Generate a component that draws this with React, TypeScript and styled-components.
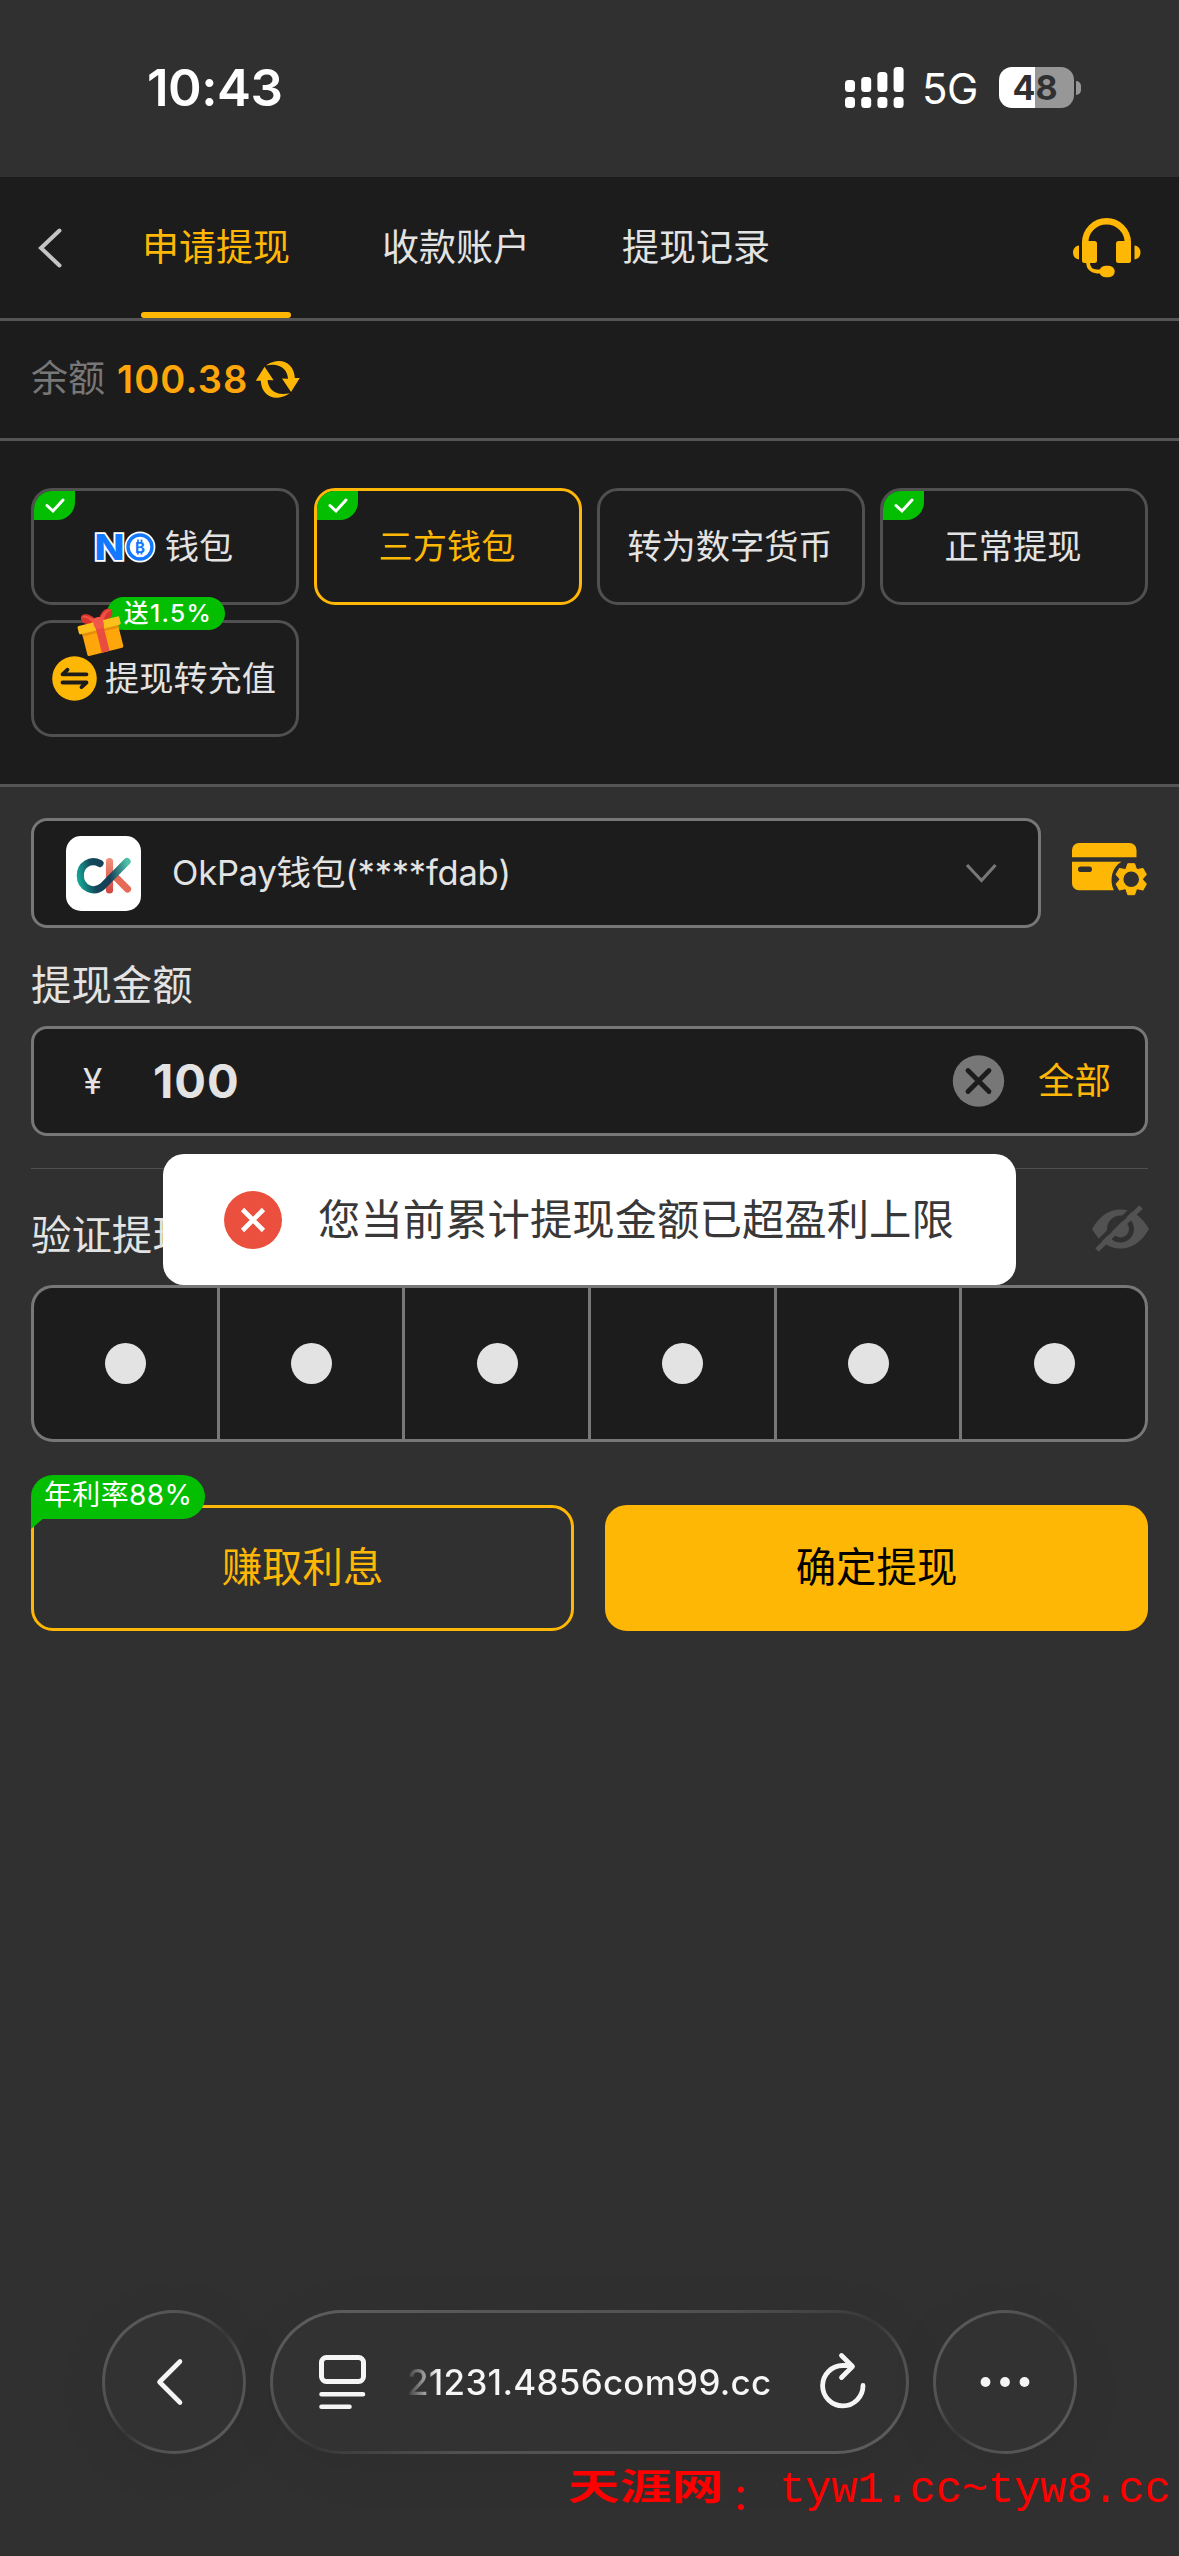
import React from "react";
import styled, { createGlobalStyle, css } from "styled-components";

const c = {
  page: "#303030",
  panel: "#1c1c1c",
  line: "#555555",
  field: "#777777",
  text: "#e3e3e3",
  gold: "#ffb706",
  green: "#04be02",
};

const Global = createGlobalStyle`
  * { box-sizing: border-box; }
  html, body { margin: 0; padding: 0; background: ${c.page}; }
  body {
    font-family: Inter, "Noto Sans CJK SC", sans-serif;
    color: ${c.text};
  }
  button { font: inherit; color: inherit; background: none; border: 0; padding: 0; margin: 0; }
  svg { display: block; flex: none; overflow: visible; }
`;

const Page = styled.div`
  position: relative;
  display: flex;
  flex-direction: column;
  width: 1179px;
  height: 2556px;
  overflow: hidden;
  background: ${c.page};
`;

/* ---------- status bar ---------- */
const StatusBar = styled.header`
  display: flex;
  align-items: center;
  justify-content: space-between;
  height: 177px;
  padding: 0 97px 2px 147px;
  color: #fff;
`;
const Clock = styled.span`
  font-size: 51px;
  font-weight: 600;
  line-height: 60px;
  letter-spacing: -0.5px;
`;
const StatusRight = styled.div`
  display: flex;
  align-items: center;
`;
const Network = styled.span`
  margin: 3px 0 0 17px;
  width: 77px;
  font-size: 42px;
  line-height: 42px;
  letter-spacing: -0.5px;
`;
const Battery = styled.div`
  display: flex;
  align-items: center;
  justify-content: center;
  width: 75px;
  height: 41px;
  padding-right: 3px;
  border-radius: 13px;
  background: linear-gradient(90deg, #fff 48%, #979797 48%);
  color: ${c.page};
  font-size: 34px;
  font-weight: 700;
  line-height: 41px;
`;
const BatteryTip = styled.div`
  width: 5px;
  height: 14px;
  margin-left: 2px;
  margin-right: 1px;
  border-radius: 0 5px 5px 0;
  background: #979797;
`;

/* ---------- navigation ---------- */
const Nav = styled.nav`
  display: flex;
  align-items: stretch;
  height: 144px;
  padding: 0 38px;
  background: ${c.panel};
  border-bottom: 3px solid ${c.line};
`;
const NavBack = styled.button`
  display: flex;
  align-items: center;
  width: 103px;
`;
const Tabs = styled.div`
  display: flex;
  flex: 1;
  gap: 90px;
`;
const Tab = styled.button<{ $active?: boolean }>`
  display: flex;
  flex-direction: column;
  align-items: center;
  justify-content: center;
  width: 150px;
  padding-top: 6px;
  border-bottom: 6px solid transparent;
  font-size: 37px;
  line-height: 40px;
  white-space: nowrap;
  color: ${(p) => (p.$active ? c.gold : c.text)};
`;
const TabLabel = styled.span`
  display: flex;
  flex: 1;
  align-items: center;
`;
const Underline = styled.span`
  width: 150px;
  height: 6px;
  margin-bottom: -6px;
  border-radius: 3px;
  background: ${c.gold};
`;
const Support = styled.button`
  display: flex;
  align-items: center;
`;

/* ---------- balance ---------- */
const Balance = styled.section`
  display: flex;
  align-items: center;
  height: 120px;
  padding: 0 31px 1px;
  background: ${c.panel};
  border-bottom: 3px solid ${c.line};
`;
const BalanceLabel = styled.span`
  width: 86px;
  font-size: 37px;
  line-height: 40px;
  color: #777;
`;
const BalanceValue = styled.span`
  width: 139px;
  font-size: 38px;
  font-weight: 600;
  line-height: 40px;
  letter-spacing: 1.1px;
  color: #ffa70a;
`;

/* ---------- methods ---------- */
const Methods = styled.section`
  display: grid;
  grid-template-columns: repeat(4, 1fr);
  grid-auto-rows: 117px;
  gap: 15px;
  height: 346px;
  padding: 47px 31px;
  background: ${c.panel};
  border-bottom: 3px solid ${c.line};
`;
const Method = styled.button<{ $active?: boolean; $gap?: number }>`
  position: relative;
  display: flex;
  align-items: center;
  justify-content: center;
  gap: ${(p) => p.$gap ?? 0}px;
  padding-right: 2px;
  border: 3px solid ${(p) => (p.$active ? c.gold : "#505050")};
  border-radius: 21px;
  font-size: 34.2px;
  line-height: 40px;
  white-space: nowrap;
  color: ${(p) => (p.$active ? c.gold : c.text)};
`;
const Check = styled.span`
  position: absolute;
  left: 0;
  top: 0;
  display: flex;
  align-items: center;
  justify-content: center;
  width: 41px;
  height: 29px;
  border-radius: 18px 0 18px 0;
  background: ${c.green};
`;
const Bonus = styled.span`
  position: absolute;
  left: 73px;
  top: -26px;
  width: 118px;
  height: 33px;
  padding-left: 17px;
  border-radius: 17px;
  background: ${c.green};
  color: #fff;
  font-size: 24.5px;
  font-weight: 500;
  line-height: 32px;
  letter-spacing: 1.4px;
  text-align: left;
`;
const GiftSpot = styled.span`
  position: absolute;
  left: 43px;
  top: -16px;
`;

/* ---------- form ---------- */
const Form = styled.main`
  display: flex;
  flex-direction: column;
  flex: 1;
  padding: 31px 31px 0;
`;
const SelectRow = styled.div`
  display: flex;
  height: 110px;
`;
const Field = styled.div`
  display: flex;
  flex: 1;
  align-items: center;
  height: 110px;
  border: 3px solid ${c.field};
  border-radius: 16px;
  background: ${c.panel};
`;
const Logo = styled.span`
  width: 75px;
  height: 75px;
  margin: 0 31px 0 32px;
  border-radius: 15px;
  background: #fff;
`;
const WalletName = styled.span`
  flex: 1;
  font-size: 34.5px;
  line-height: 40px;
  letter-spacing: -0.2px;
`;
const ChevronBox = styled.span`
  margin-right: 42px;
`;
const CardSettings = styled.button`
  display: flex;
  align-items: flex-start;
  width: 107px;
  padding: 25px 0 0 31px;
`;
const Label = styled.label`
  font-size: 40.4px;
  line-height: 50px;
`;
const AmountLabel = styled(Label)`
  margin: 33px 0 15px;
`;
const AmountField = styled(Field)`
  flex: none;
`;
const Currency = styled.span`
  width: 70px;
  margin-left: 49px;
  font-size: 35px;
  line-height: 40px;
`;
const Amount = styled.span`
  flex: 1;
  font-size: 47px;
  font-weight: 700;
  line-height: 50px;
  letter-spacing: 1px;
`;
const AllButton = styled.button`
  width: 107px;
  margin-left: 34px;
  font-size: 36.5px;
  line-height: 40px;
  text-align: left;
  color: ${c.gold};
`;
const Rule = styled.hr`
  width: 100%;
  height: 1px;
  margin: 32px 0 0;
  border: 0;
  background: #505050;
`;
const PinHead = styled.div`
  display: flex;
  align-items: flex-start;
  justify-content: space-between;
  height: 116px;
  padding-top: 42px;
`;
const EyeBox = styled.button`
  margin: -6px -1px 0 0;
`;
const PinGrid = styled.div`
  display: grid;
  grid-template-columns: repeat(6, 1fr);
  gap: 3px;
  height: 157px;
  border: 3px solid ${c.field};
  border-radius: 22px;
  background: ${c.field};
  overflow: hidden;
`;
const PinCell = styled.div`
  display: flex;
  align-items: center;
  justify-content: center;
  padding-left: 1px;
  background: ${c.panel};
`;
const PinDot = styled.span`
  width: 41px;
  height: 41px;
  border-radius: 50%;
  background: ${c.text};
`;
const Actions = styled.div`
  display: grid;
  grid-template-columns: 1fr 1fr;
  gap: 31px;
  margin-top: 63px;
`;
const Action = styled.button<{ $solid?: boolean }>`
  position: relative;
  height: 126px;
  border: 3px solid ${c.gold};
  border-radius: 22px;
  font-size: 40.4px;
  line-height: 120px;
  background: ${(p) => (p.$solid ? c.gold : "transparent")};
  color: ${(p) => (p.$solid ? "#000" : c.gold)};
`;
const RateBadge = styled.span`
  position: absolute;
  left: -3px;
  top: -33px;
  width: 174px;
  height: 44px;
  padding-left: 13px;
  border-radius: 22px 22px 22px 0;
  background: ${c.green};
  color: #fff;
  font-size: 28px;
  line-height: 41px;
  letter-spacing: 0.35px;
  text-align: left;
  white-space: nowrap;
  &::after {
    content: "";
    position: absolute;
    left: 0;
    top: 43px;
    border-top: 11px solid ${c.green};
    border-right: 13px solid transparent;
  }
`;

/* ---------- toast ---------- */
const Toast = styled.div`
  position: absolute;
  left: 163px;
  top: 1154px;
  display: flex;
  align-items: center;
  gap: 36px;
  width: 853px;
  height: 131px;
  padding-left: 61px;
  border-radius: 21px;
  background: #fff;
  color: #383838;
  font-size: 42.4px;
  line-height: 50px;
  white-space: nowrap;
`;

/* ---------- browser bar ---------- */
const BrowserBar = styled.footer`
  display: flex;
  justify-content: center;
  gap: 24px;
  height: 246px;
`;
const glass = css`
  display: flex;
  align-items: center;
  height: 144px;
  border: 3px solid transparent;
  border-radius: 72px;
  background:
    linear-gradient(#323232, #323232) padding-box,
    linear-gradient(to bottom right, #5e5e5e 0%, #505050 36%, #363636 51%, #505050 64%, #5e5e5e 100%) border-box;
  box-shadow: 0 10px 60px rgba(0, 0, 0, 0.06);
  color: #f5f5f5;
`;
const RoundButton = styled.button`
  ${glass}
  justify-content: center;
  width: 144px;
`;
const AddressBar = styled.div`
  ${glass}
  width: 639px;
  padding: 0 40px 0 46px;
`;
const Address = styled.span`
  flex: 1;
  margin-left: 40px;
  font-size: 35px;
  font-weight: 500;
  line-height: 44px;
  letter-spacing: 0.25px;
  white-space: nowrap;
  background: linear-gradient(90deg, #3a3a3a 0, #888 14px, #f5f5f5 32px);
  -webkit-background-clip: text;
  background-clip: text;
  color: transparent;
`;

/* ---------- site mark ---------- */
const SiteMark = styled.div`
  position: absolute;
  left: 568px;
  top: 2462px;
  display: flex;
  align-items: center;
  height: 54px;
  color: #ff0000;
  white-space: nowrap;
`;
const SiteName = styled.span`
  width: 166px;
  margin-top: -8px;
  font-family: "Noto Sans CJK SC", sans-serif;
  font-size: 52px;
  font-weight: 700;
  line-height: 54px;
  transform: scaleY(0.7);
`;
const SiteColon = styled.span`
  width: 45px;
  padding-top: 9px;
  font-size: 44px;
  line-height: 44px;
`;
const SiteUrl = styled.span`
  padding-top: 3px;
  font-family: "Liberation Mono", monospace;
  font-size: 43.5px;
  line-height: 50px;
`;

/* ---------- icons ---------- */
const SignalIcon = () => (
  <svg width="60" height="41" viewBox="0 0 60 41" fill="#fff">
    {[13, 10, 5, 0].map((top, i) => (
      <g key={i}>
        <rect x={i * 16.2} y={top} width="10" height={25 - top} rx="3.5" />
        <rect x={i * 16.2} y="30" width="10" height="11" rx="3.5" />
      </g>
    ))}
  </svg>
);

const HeadsetIcon = () => (
  <svg width="68" height="60" viewBox="0 0 68 60" fill={c.gold}>
    <path d="M12.2 26V24.5a21.3 21.3 0 0 1 42.6 0V26" fill="none" stroke={c.gold} strokeWidth="6.4" />
    <path d="M9 23h12.5a2.5 2.5 0 0 1 2.5 2.5v17a2.5 2.5 0 0 1-2.5 2.5H11.5a2.5 2.5 0 0 1-2.5-2.5z" />
    <path d="M58 23H45.5a2.5 2.5 0 0 0-2.5 2.5v17a2.5 2.5 0 0 0 2.5 2.5h10a2.5 2.5 0 0 0 2.5-2.5z" />
    <path d="M6 27.5v14C2 41 0 38 0 34.500S2 28 6 27.500zM61.5 27.500v14c4-.5 6-3.500 6-7s-2-6.500-6-7z" />
    <path d="M15 44c0 6 4 9.500 9 9.500h5" fill="none" stroke={c.gold} strokeWidth="3.8" />
    <rect x="26.500" y="47.700" width="15.200" height="11.600" rx="5.800" />
  </svg>
);

const RefreshIcon = () => (
  <svg width="44" height="37" viewBox="0 0 44 37" fill={c.gold}>
    <path d="M10 4.500C15 1 20 0 23 0c9 0 15.500 7 15.800 17h5L35 31l-9-13.500 6 .3C31.500 9 25 1.500 10 4.500z" />
    <path
      transform="rotate(180 21.800 18.400)"
      d="M10 4.500C15 1 20 0 23 0c9 0 15.500 7 15.800 17h5L35 31l-9-13.500 6 .3C31.500 9 25 1.500 10 4.500z"
    />
  </svg>
);

const CheckIcon = () => (
  <svg width="20" height="15" viewBox="0 0 20 15">
    <path d="M2 7.500l6 5.500L18 2" fill="none" stroke="#fff" strokeWidth="3" strokeLinecap="round" />
  </svg>
);

const NoLogo = () => (
  <svg width="61" height="30" viewBox="0 0 61 30">
    <text
      x="-0.5"
      y="28.300"
      textLength="30"
      lengthAdjust="spacingAndGlyphs"
      fontFamily="Inter, sans-serif"
      fontWeight="800"
      fontSize="36"
      fill="#1278ff"
      stroke="#fff"
      strokeWidth="3.400"
      paintOrder="stroke"
    >
      N
    </text>
    <circle cx="45" cy="15" r="15.400" fill="#fff" />
    <circle cx="45" cy="15" r="12" fill="#fff" stroke="#1278ff" strokeWidth="3.400" />
    <text x="45" y="20.500" textAnchor="middle" fontFamily="Inter, sans-serif" fontWeight="700" fontSize="15" fill="#1278ff">
      B
    </text>
    <path d="M43 7.500v3M46.500 7.500v3M43 19.500v3M46.500 19.500v3" stroke="#1278ff" strokeWidth="1.700" />
  </svg>
);

const SwapIcon = () => (
  <svg width="45" height="45" viewBox="0 0 45 45">
    <circle cx="22.500" cy="22.500" r="22.300" fill={c.gold} />
    <g fill="none" stroke={c.panel} strokeWidth="3.800" strokeLinecap="round" strokeLinejoin="round">
      <path d="M34.500 18.300H10.500l5-4.600" />
      <path d="M10.500 26.500H34.500l-5 4.600" />
    </g>
  </svg>
);

const GiftIcon = () => (
  <svg width="47" height="49" viewBox="0 0 47 49">
    <g transform="rotate(-14 23.500 26)">
      <path d="M23 15C17 15 8 15 8 8c0-6 9-6 15 5z" fill="#d9342b" />
      <path d="M25 15c7 0 15 0 15-7 0-6-10-6-15 5z" fill="#d9342b" />
      <path d="M23 14C18 7 11 3 8.500 6.500 14 7 17 11 18 15zM25 14c4-7 12-11 14.500-7.500C34 7 31 11 30 15z" fill="#ee5244" />
      <rect x="5.500" y="21" width="37" height="24.500" rx="1.500" fill="#ffa60b" />
      <rect x="5.500" y="21" width="37" height="4" fill="#e88d0c" />
      <rect x="2.500" y="14" width="43" height="8.500" rx="1.500" fill="#fbc01b" />
      <rect x="20" y="13" width="8" height="32.500" fill="#e94d3f" />
      <rect x="19" y="10" width="10" height="11.500" rx="4" fill="#f0594a" />
    </g>
  </svg>
);

const OkLogo = () => (
  <svg width="75" height="75" viewBox="0 0 75 75" fill="none" strokeWidth="7.200" strokeLinecap="round">
    <defs>
      <linearGradient id="okTeal" x1="12" y1="40" x2="62" y2="30" gradientUnits="userSpaceOnUse">
        <stop offset="0" stopColor="#16a393" />
        <stop offset="0.300" stopColor="#12475b" />
        <stop offset="0.600" stopColor="#153f57" />
        <stop offset="1" stopColor="#4fc0a8" />
      </linearGradient>
      <linearGradient id="okRed" x1="0" y1="22" x2="0" y2="58" gradientUnits="userSpaceOnUse">
        <stop offset="0" stopColor="#f0917a" />
        <stop offset="1" stopColor="#d0443f" />
      </linearGradient>
    </defs>
    <rect x="39.900" y="21.900" width="7.200" height="35.700" rx="3.600" fill="url(#okRed)" />
    <path d="M50 41.500L61.500 53" stroke="#e56a58" />
    <path d="M34 27.500C24 22.500 14.300 29 14.300 39.500 14.300 52 28 58 37 50L61 25.500" stroke="url(#okTeal)" />
  </svg>
);

const CardGearIcon = () => (
  <svg width="75" height="52" viewBox="0 0 75 52" fill={c.gold}>
    <path d="M0 14.300V7a7 7 0 0 1 7-7h50.500a7 7 0 0 1 7 7v7.300z" />
    <path d="M0 18.800h49.500C40 24 37 37 41.800 47.300H7a7 7 0 0 1-7-7z" />
    <rect x="6" y="23.500" width="14" height="5.600" rx="2.800" fill={c.page} />
    <g transform="translate(59.200 36.200)">
      <circle r="9.800" fill="none" stroke={c.gold} strokeWidth="4" />
      {[0, 60, 120, 180, 240, 300].map((a) => (
        <path
          key={a}
          transform={`rotate(${a})`}
          d="M-5.200-10.200L-3.400-15.500h6.800L5.200-10.200z"
          strokeLinejoin="round"
          stroke={c.gold}
          strokeWidth="1"
        />
      ))}
    </g>
  </svg>
);

const EyeOffIcon = () => (
  <svg width="57" height="47" viewBox="0 0 57 47" fill="#525252">
    <path d="M0 24C8 10 18 4.500 28.500 4.500S49 10 57 24C49 38 39 43.500 28.500 43.500S8 38 0 24z" />
    <circle cx="28.500" cy="24" r="11" fill="none" stroke={c.page} strokeWidth="5" />
    <path d="M5 45L49 2" stroke="#525252" strokeWidth="5" />
    <path d="M0 43L44 0" stroke={c.page} strokeWidth="4" />
  </svg>
);

const ClearIcon = () => (
  <svg width="52" height="52" viewBox="0 0 52 52">
    <circle cx="26.500" cy="26" r="25.700" fill={c.field} />
    <path d="M16 15.500l21 21M37 15.500l-21 21" stroke={c.panel} strokeWidth="4.800" strokeLinecap="round" />
  </svg>
);

const ErrorIcon = () => (
  <svg width="58" height="58" viewBox="0 0 58 58">
    <circle cx="29" cy="29" r="29" fill="#eb4f3d" />
    <path d="M18.500 18.500l21 21M39.500 18.500l-21 21" stroke="#fff" strokeWidth="4.600" />
  </svg>
);

const ReaderIcon = () => (
  <svg width="48" height="54" viewBox="0 0 48 54" fill="none" stroke="currentColor" strokeWidth="5" strokeLinecap="round">
    <rect x="2.500" y="2.500" width="42" height="24" rx="5" />
    <path d="M2.500 39.300H44M2.500 51.800H30.500" strokeWidth="4.600" />
  </svg>
);

const ReloadIcon = () => (
  <svg
    width="46"
    height="56"
    viewBox="0 0 46 56"
    fill="none"
    stroke="currentColor"
    strokeWidth="4.800"
    strokeLinecap="round"
    strokeLinejoin="round"
  >
    <path d="M43 31.500A20.200 20.200 0 1 1 22.800 11.500H31" />
    <path d="M21.500 1.500L32.500 12.500 21.500 23.500" />
  </svg>
);

const methods = [
  { label: "钱包", checked: true, icon: <NoLogo />, gap: 9 },
  { label: "三方钱包", checked: true, active: true },
  { label: "转为数字货币" },
  { label: "正常提现", checked: true },
  { label: "提现转充值", icon: <SwapIcon />, gap: 8, bonus: "送1.5%" },
];

export default function App() {
  return (
    <Page>
      <Global />
      <StatusBar>
        <Clock>10:43</Clock>
        <StatusRight>
          <SignalIcon />
          <Network>5G</Network>
          <Battery>48</Battery>
          <BatteryTip />
        </StatusRight>
      </StatusBar>

      <Nav>
        <NavBack aria-label="返回">
          <svg width="23" height="38" viewBox="0 0 23 38">
            <path d="M21.500 1.500L3 19l18.500 17.500" fill="none" stroke="#c4c4c4" strokeWidth="4" strokeLinecap="round" />
          </svg>
        </NavBack>
        <Tabs>
          <Tab $active>
            <TabLabel>申请提现</TabLabel>
            <Underline />
          </Tab>
          <Tab>
            <TabLabel>收款账户</TabLabel>
          </Tab>
          <Tab>
            <TabLabel>提现记录</TabLabel>
          </Tab>
        </Tabs>
        <Support aria-label="客服">
          <HeadsetIcon />
        </Support>
      </Nav>

      <Balance>
        <BalanceLabel>余额</BalanceLabel>
        <BalanceValue>100.38</BalanceValue>
        <RefreshIcon />
      </Balance>

      <Methods>
        {methods.map((m) => (
          <Method key={m.label} $active={m.active} $gap={m.gap}>
            {m.checked && (
              <Check>
                <CheckIcon />
              </Check>
            )}
            {m.icon}
            <span>{m.label}</span>
            {m.bonus && (
              <>
                <Bonus>{m.bonus}</Bonus>
                <GiftSpot>
                  <GiftIcon />
                </GiftSpot>
              </>
            )}
          </Method>
        ))}
      </Methods>

      <Form>
        <SelectRow>
          <Field>
            <Logo>
              <OkLogo />
            </Logo>
            <WalletName>OkPay钱包(****fdab)</WalletName>
            <ChevronBox>
              <svg width="30" height="18" viewBox="0 0 30 18">
                <path d="M1 1l14.500 15.500L29.500 1" fill="none" stroke={c.field} strokeWidth="3.200" />
              </svg>
            </ChevronBox>
          </Field>
          <CardSettings aria-label="管理">
            <CardGearIcon />
          </CardSettings>
        </SelectRow>

        <AmountLabel>提现金额</AmountLabel>
        <AmountField>
          <Currency>¥</Currency>
          <Amount>100</Amount>
          <ClearIcon />
          <AllButton>全部</AllButton>
        </AmountField>
        <Rule />

        <PinHead>
          <Label>验证提现密码</Label>
          <EyeBox aria-label="显示">
            <EyeOffIcon />
          </EyeBox>
        </PinHead>
        <PinGrid>
          {Array.from({ length: 6 }, (_, i) => (
            <PinCell key={i}>
              <PinDot />
            </PinCell>
          ))}
        </PinGrid>

        <Actions>
          <Action>
            赚取利息
            <RateBadge>年利率88%</RateBadge>
          </Action>
          <Action $solid>确定提现</Action>
        </Actions>
      </Form>

      <BrowserBar>
        <RoundButton aria-label="后退">
          <svg width="26" height="46" viewBox="0 0 26 46">
            <path
              d="M19 2.500L-1.500 23 19 43.500"
              fill="none"
              stroke="currentColor"
              strokeWidth="4.600"
              strokeLinecap="round"
              strokeLinejoin="round"
            />
          </svg>
        </RoundButton>
        <AddressBar>
          <ReaderIcon />
          <Address>21231.4856com99.cc</Address>
          <ReloadIcon />
        </AddressBar>
        <RoundButton aria-label="更多">
          <svg width="50" height="12" viewBox="0 0 50 12" fill="currentColor">
            <circle cx="5.500" cy="6" r="4.900" />
            <circle cx="25" cy="6" r="4.900" />
            <circle cx="44.500" cy="6" r="4.900" />
          </svg>
        </RoundButton>
      </BrowserBar>

      <Toast>
        <ErrorIcon />
        <span>您当前累计提现金额已超盈利上限</span>
      </Toast>

      <SiteMark>
        <SiteName>天涯网</SiteName>
        <SiteColon>:</SiteColon>
        <SiteUrl>tyw1.cc~tyw8.cc</SiteUrl>
      </SiteMark>
    </Page>
  );
}
